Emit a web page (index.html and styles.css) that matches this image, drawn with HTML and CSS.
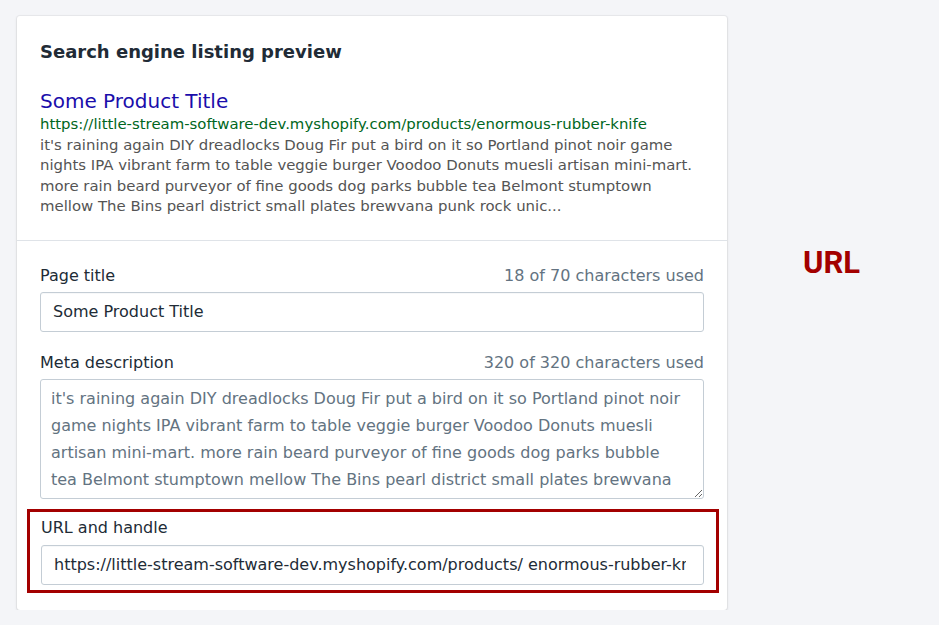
FILE: index.html
```html
<!DOCTYPE html>
<html lang="en">
<head>
<meta charset="utf-8">
<title>Search engine listing preview</title>
<link rel="stylesheet" href="styles.css">
</head>
<body>
<div class="page">
  <div class="card">
    <section class="card-section preview-section">
      <h2 class="card-title">Search engine listing preview</h2>
      <div class="serp">
        <div class="serp-title">Some Product Title</div>
        <div class="serp-url">https://little-stream-software-dev.myshopify.com/products/enormous-rubber-knife</div>
        <div class="serp-desc">it's raining again DIY dreadlocks Doug Fir put a bird on it so Portland pinot noir game nights IPA vibrant farm to table veggie burger Voodoo Donuts muesli artisan mini-mart. more rain beard purveyor of fine goods dog parks bubble tea Belmont stumptown mellow The Bins pearl district small plates brewvana punk rock unic...</div>
      </div>
    </section>
    <section class="card-section form-section">
      <div class="field">
        <div class="label-row">
          <label class="label" for="title">Page title</label>
          <span class="counter">18 of 70 characters used</span>
        </div>
        <input class="text-input" id="title" type="text" value="Some Product Title">
      </div>
      <div class="field">
        <div class="label-row">
          <label class="label" for="desc">Meta description</label>
          <span class="counter">320 of 320 characters used</span>
        </div>
        <textarea class="text-area" id="desc">it's raining again DIY dreadlocks Doug Fir put a bird on it so Portland pinot noir game nights IPA vibrant farm to table veggie burger Voodoo Donuts muesli artisan mini-mart. more rain beard purveyor of fine goods dog parks bubble tea Belmont stumptown mellow The Bins pearl district small plates brewvana punk rock unicorn selfie.</textarea>
      </div>
      <div class="field field-highlight">
        <div class="label-row">
          <label class="label" for="url">URL and handle</label>
        </div>
        <input class="text-input url-input" id="url" type="text" value="https://little-stream-software-dev.myshopify.com/products/ enormous-rubber-knife">
      </div>
    </section>
  </div>
  <div class="annotation">URL</div>
</div>
</body>
</html>
```

FILE: styles.css
```css
html, body {
  margin: 0;
  padding: 0;
  background: #f4f5f8;
}

body {
  font-family: "DejaVu Sans", Verdana, sans-serif;
  color: #212b36;
}

.page {
  display: flex;
  align-items: flex-start;
  padding: 16px 0 0 17px;
}

.card {
  width: 710px;
  background: #ffffff;
  border-radius: 3px;
  box-shadow: 0 0 0 1px rgba(63, 63, 68, 0.05), 0 1px 3px 0 rgba(63, 63, 68, 0.15);
}

.card-section {
  padding: 23px 23px;
}

.preview-section {
  padding-top: 24px;
  border-bottom: 1px solid #dfe3e8;
}

.card-title {
  margin: 0;
  font-size: 18px;
  line-height: 24px;
  font-weight: 700;
  color: #212b36;
}

.serp {
  margin-top: 24px;
}

.serp-title {
  font-size: 20px;
  line-height: 26px;
  color: #1a0dab;
}

.serp-url {
  font-size: 14.9px;
  line-height: 20.5px;
  color: #006621;
  white-space: nowrap;
}

.serp-desc {
  font-size: 14.9px;
  line-height: 20.5px;
  color: #545454;
  padding-right: 10px;
}

.form-section {
  padding-top: 23px;
  padding-bottom: 17px;
}

.field + .field {
  margin-top: 19px;
}

.label-row {
  display: flex;
  justify-content: space-between;
  align-items: baseline;
  margin-bottom: 4px;
}

.label {
  font-size: 16px;
  line-height: 24px;
  color: #212b36;
}

.counter {
  font-size: 16px;
  line-height: 24px;
  color: #637381;
}

.text-input {
  display: block;
  box-sizing: border-box;
  width: 100%;
  height: 40px;
  margin: 0;
  padding: 0 12px;
  border: 1px solid #c4cdd5;
  border-radius: 3px;
  background: #ffffff;
  font-family: "DejaVu Sans", Verdana, sans-serif;
  font-size: 16px;
  color: #212b36;
  box-shadow: inset 0 1px 0 0 rgba(99, 115, 129, 0.05);
  outline: none;
}

.text-area {
  display: block;
  box-sizing: border-box;
  width: 100%;
  height: 120px;
  margin: 0;
  padding: 5px 16px 5px 10px;
  border: 1px solid #c4cdd5;
  border-radius: 3px;
  background: #ffffff;
  font-family: "DejaVu Sans", Verdana, sans-serif;
  font-size: 16px;
  line-height: 27px;
  color: #637381;
  overflow: hidden;
  resize: vertical;
  outline: none;
}

.field.field-highlight {
  margin: 10px -15px 0 -13px;
  padding: 4px 12px 5px 11px;
  border: 3px solid #a30000;
}

.field-highlight .label-row {
  margin-bottom: 5px;
}

.url-input {
  padding: 0 17px 0 12px;
}

.annotation {
  margin: 229px 0 0 76px;
  font-family: Roboto, "Open Sans", sans-serif;
  font-weight: 700;
  font-size: 31px;
  line-height: 36px;
  color: #a30000;
}
```
